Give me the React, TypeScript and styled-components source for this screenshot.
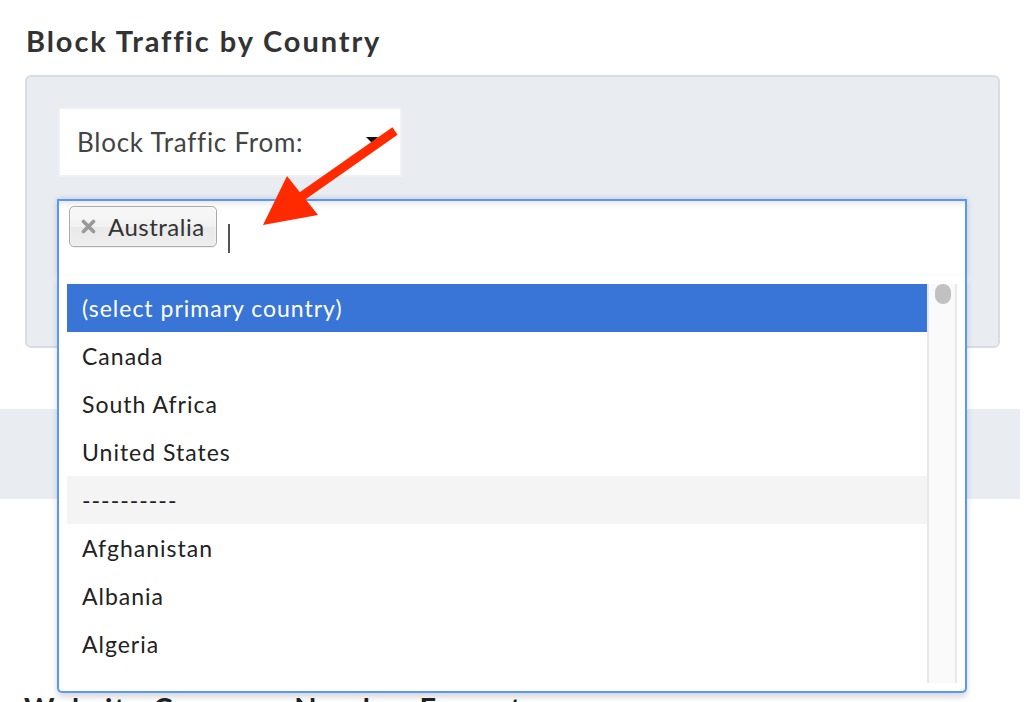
import React from "react";
import styled, { createGlobalStyle } from "styled-components";

const Global = createGlobalStyle`
  html, body { margin: 0; padding: 0; background: #fff; }
  body { font-family: "Lato", "Noto Sans", sans-serif; overflow: hidden; }
`;

const Page = styled.div`
  position: relative;
  width: 1034px;
  height: 702px;
  overflow: hidden;
  padding-top: 24px;
  box-sizing: border-box;
`;

const Section = styled.section`
  padding: 0 34px 0 25px;
`;

const Heading = styled.h2`
  margin: 0 0 0 1px;
  font-size: 29px;
  line-height: 34px;
  letter-spacing: 1.9px;
  font-weight: 700;
  color: #333;
`;

const Panel = styled.div`
  margin-top: 17px;
  background: #e9ecf1;
  border: 2px solid #d9dde3;
  border-radius: 6px;
  padding: 30px 31px 70px 31px;
`;

const SelectBox = styled.div`
  position: relative;
  width: 344px;
  height: 70px;
  box-sizing: border-box;
  background: #fff;
  border: 2px solid #eef0f3;
  display: flex;
  align-items: center;
  padding-left: 17px;
  font-size: 26px;
  letter-spacing: 0.75px;
  color: #444;
`;

const Caret = styled.span`
  position: absolute;
  right: 22px;
  top: 28px;
  width: 0;
  height: 0;
  border-left: 6px solid transparent;
  border-right: 6px solid transparent;
  border-top: 6px solid #111;
`;

const ChosenWrap = styled.div`
  position: relative;
  margin-top: 22px;
  margin-left: -1px;
  width: 910px;
  z-index: 2;
`;

const Choices = styled.div`
  height: 77px;
  box-sizing: border-box;
  background: #fff;
  border: 2px solid #5897fb;
  border-bottom: none;
  padding: 5px 10px 0 10px;
  display: flex;
  align-items: flex-start;
  gap: 11px;
  box-shadow: inset 0 9px 8px -8px rgba(0, 0, 0, 0.14), 0 0 6px rgba(0, 0, 0, 0.18);
`;

const Tag = styled.div`
  height: 41px;
  box-sizing: border-box;
  display: flex;
  align-items: center;
  gap: 12px;
  padding: 0 11px 0 11px;
  border: 1.5px solid #aaa;
  border-radius: 5px;
  background: linear-gradient(#f6f6f6 20%, #f1f1f1 50%, #e9e9e9 52%, #eee 100%);
  box-shadow: inset 0 0 2px #fff, 0 1px 0 rgba(0, 0, 0, 0.05);
  font-size: 24px;
  letter-spacing: 0.5px;
  color: #333;
`;

const Cursor = styled.span`
  display: block;
  margin-top: 18px;
  width: 2px;
  height: 29px;
  background: #555;
`;

const Drop = styled.div`
  position: absolute;
  left: 0;
  right: 0;
  top: 100%;
  height: 417px;
  box-sizing: border-box;
  background: #fff;
  border: 2px solid #5897fb;
  border-top: none;
  border-radius: 0 0 5px 5px;
  padding: 8px;
  display: flex;
  box-shadow: 0 4px 6px rgba(0, 0, 0, 0.16);
`;

const List = styled.ul`
  flex: 1;
  margin: 0;
  padding: 0;
  list-style: none;
  overflow: hidden;
`;

const Row = styled.li<{ $active?: boolean; $sep?: boolean }>`
  height: 48px;
  display: flex;
  align-items: center;
  padding-left: 15px;
  font-size: 23px;
  letter-spacing: 1px;
  color: ${(p) => (p.$active ? "#fff" : "#222")};
  background: ${(p) => (p.$active ? "#3875d7" : p.$sep ? "#f4f4f4" : "transparent")};
`;

const Track = styled.div`
  position: relative;
  width: 30px;
  box-sizing: border-box;
  background: #fafafa;
  border-left: 2px solid #e8e8e8;
  border-right: 2px solid #e8e8e8;
`;

const Thumb = styled.div`
  position: absolute;
  left: 6px;
  top: 0;
  width: 16px;
  height: 20px;
  border-radius: 8px;
  background: #c1c1c1;
`;

const Band = styled.div`
  margin-top: 61px;
  width: 1020px;
  height: 90px;
  background: #e9ecf1;
`;

const NextHeading = styled.h2`
  margin: 192px 0 0 24px;
  font-size: 29px;
  line-height: 34px;
  letter-spacing: 1.9px;
  font-weight: 700;
  color: #222;
  white-space: nowrap;
`;

const Overlay = styled.svg`
  position: absolute;
  left: 0;
  top: 0;
  pointer-events: none;
  z-index: 5;
`;

const countries = ["Canada", "South Africa", "United States"];
const rest = ["Afghanistan", "Albania", "Algeria", "American Samoa", "Andorra"];

export default function App() {
  return (
    <Page>
      <Global />
      <Section>
        <Heading>Block Traffic by Country</Heading>
        <Panel>
          <SelectBox>
            Block Traffic From:
            <Caret />
          </SelectBox>
          <ChosenWrap>
            <Choices>
              <Tag>
                <svg width="15" height="15" viewBox="0 0 15 15">
                  <path d="M2.5 2.5 L12.5 12.5 M12.5 2.5 L2.5 12.5" stroke="#999" strokeWidth="3.6" strokeLinecap="round" />
                </svg>
                Australia
              </Tag>
              <Cursor />
            </Choices>
            <Drop>
              <List>
                <Row $active>(select primary country)</Row>
                {countries.map((c) => (
                  <Row key={c}>{c}</Row>
                ))}
                <Row $sep>----------</Row>
                {rest.map((c) => (
                  <Row key={c}>{c}</Row>
                ))}
              </List>
              <Track>
                <Thumb />
              </Track>
            </Drop>
          </ChosenWrap>
        </Panel>
      </Section>
      <Band />
      <NextHeading>Website Currency Number Format</NextHeading>
      <Overlay width="1034" height="702" viewBox="0 0 1034 702">
        <line x1="395" y1="131" x2="298" y2="199" stroke="#ff2a00" strokeWidth="9" />
        <polygon points="263,225 287,176 318,215" fill="#ff2a00" />
      </Overlay>
    </Page>
  );
}
